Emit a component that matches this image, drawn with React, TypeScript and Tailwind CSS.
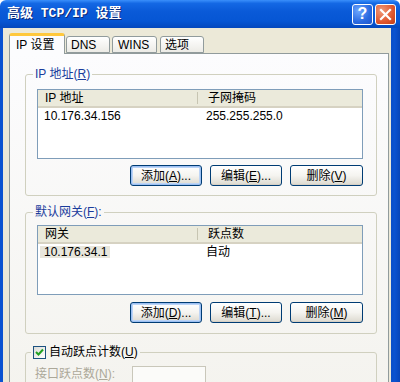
import React from "react";

const font = "font-['Liberation_Sans','Noto_Sans_CJK_SC',sans-serif]";

function U({ c }: { c: string }) {
  return <span className="underline underline-offset-[1px]">{c}</span>;
}

function Btn({ children, w, focus }: { children: React.ReactNode; w: string; focus?: boolean }) {
  return (
    <div
      className={`${w} h-[21px] rounded-[3px] border border-[#003c74] bg-gradient-to-b from-[#ffffff] via-[#f5f4f0] to-[#dcd9cf] flex items-center justify-center text-[12px] leading-[12px] text-black ${
        focus ? "shadow-[inset_0_0_0_1px_#9cc0f2,inset_0_0_0_2px_#bcd4f6]" : "shadow-[inset_0_-1px_0_#d6d0c5]"
      }`}
    >
      {children}
    </div>
  );
}

function ListView({
  h1,
  h2,
  c1,
  c2,
  selected,
}: {
  h1: string;
  h2: string;
  c1: string;
  c2: string;
  selected?: boolean;
}) {
  return (
    <div className="w-[326px] h-[70px] border border-[#7f9db9] bg-white flex flex-col">
      <div className="h-[18px] flex bg-[#ebeadb] border-b-2 border-[#d6d2c2] text-[12px] leading-[16px]">
        <div className="w-[160px] pl-[7px] flex items-center border-r border-[#c7c5b2] my-[2px]">{h1}</div>
        <div className="flex-1 pl-[10px] flex items-center">{h2}</div>
      </div>
      <div className="h-[16px] flex items-center text-[12px] leading-[12px]">
        <div className="w-[160px] pl-[2px]">
          <span className={`inline-block h-[12px] pl-[4px] pr-[3px] ${selected ? "bg-[#e8e6dc]" : ""}`}>{c1}</span>
        </div>
        <div className="flex-1 pl-[8px]">{c2}</div>
      </div>
    </div>
  );
}

function ButtonsRow({ a, b, c }: { a: React.ReactNode; b: React.ReactNode; c: React.ReactNode }) {
  return (
    <div className="w-[326px] flex justify-end gap-[8px]">
      <Btn w="w-[72px]" focus>
        {a}
      </Btn>
      <Btn w="w-[72px]">{b}</Btn>
      <Btn w="w-[73px]">{c}</Btn>
    </div>
  );
}

export default function App() {
  return (
    <div className={`w-[400px] h-[382px] overflow-hidden flex flex-col bg-white ${font}`}>
      {/* Title bar */}
      <div className="h-[28px] shrink-0 flex items-center rounded-t-[6px] bg-[linear-gradient(to_bottom,#3a8ffb_0%,#1468e4_12%,#0a5ad8_40%,#0656d4_75%,#0448bd_100%)] pl-[7px] pr-[4px]">
        <div className="flex-1 text-white text-[13px] leading-[16px] font-bold [text-shadow:1px_1px_0_#0a2a7a] font-['Liberation_Mono','Noto_Sans_CJK_SC',monospace] whitespace-pre">
          高级 TCP/IP 设置
        </div>
        <div className="flex gap-[2px] items-center">
          <div className="w-[21px] h-[21px] rounded-[3px] border border-white bg-[radial-gradient(circle_at_30%_30%,#6fa8ff,#2a6ae0_60%,#1f55cc)] flex items-center justify-center text-white font-bold text-[16px] leading-[16px]">
            ?
          </div>
          <div className="w-[21px] h-[21px] rounded-[3px] border border-white bg-[radial-gradient(circle_at_30%_30%,#f09a7a,#e0572e_60%,#c23c14)] flex items-center justify-center">
            <svg width="13" height="13" viewBox="0 0 13 13">
              <path d="M2 2 L11 11 M11 2 L2 11" stroke="white" strokeWidth="2.2" strokeLinecap="square" />
            </svg>
          </div>
        </div>
      </div>

      {/* Body */}
      <div className="flex-1 flex">
        <div className="w-[3px] bg-[#0b53d1]" />
        <div className="flex-1 bg-[#ece9d8] pl-[6px] pr-[2px] pt-[5px] flex flex-col">
          {/* Tabs */}
          <div className="h-[20px] flex items-end text-[12px] leading-[12px]">
            <div className="relative z-10 -mb-px w-[56px] h-[21px] rounded-t-[3px] border border-b-0 border-[#919b9c] border-t-[3px] border-t-[#ffc83c] bg-[#fcfcfe] pl-[6px] flex items-center">
              IP 设置
            </div>
            <div className="ml-[1px] w-[44px] h-[17px] rounded-t-[3px] border border-[#919b9c] bg-gradient-to-b from-white to-[#ecebe6] pl-[4px] flex items-center">
              DNS
            </div>
            <div className="ml-[2px] w-[45px] h-[17px] rounded-t-[3px] border border-[#919b9c] bg-gradient-to-b from-white to-[#ecebe6] pl-[5px] flex items-center">
              WINS
            </div>
            <div className="ml-[3px] w-[44px] h-[17px] rounded-t-[3px] border border-[#919b9c] bg-gradient-to-b from-white to-[#ecebe6] pl-[4px] flex items-center">
              选项
            </div>
          </div>
          {/* Panel */}
          <div className="w-[380px] flex-1 border border-[#919b9c] bg-gradient-to-b from-[#fcfcfe] to-[#f4f3ee] pl-[15px] pt-[13px] text-[12px]">
            <fieldset className="w-[352px] rounded-[3px] border border-[#d0d0bf] pl-[11px] pt-[8px] pb-[9px]">
              <legend className="ml-[-4px] px-[2px] h-[14px] leading-[14px] text-[#1a3c9c]">
                IP 地址(<U c="R" />)
              </legend>
              <ListView h1="IP 地址" h2="子网掩码" c1="10.176.34.156" c2="255.255.255.0" />
              <div className="mt-[6px]">
                <ButtonsRow
                  a={<>添加(<U c="A" />)...</>}
                  b={<>编辑(<U c="E" />)...</>}
                  c={<>删除(<U c="V" />)</>}
                />
              </div>
            </fieldset>

            <fieldset className="mt-[9px] w-[352px] rounded-[3px] border border-[#d0d0bf] pl-[11px] pt-[6px] pb-[10px]">
              <legend className="ml-[-4px] px-[2px] h-[14px] leading-[14px] text-[#1a3c9c]">
                默认网关(<U c="F" />):
              </legend>
              <ListView h1="网关" h2="跃点数" c1="10.176.34.1" c2="自动" selected />
              <div className="mt-[7px]">
                <ButtonsRow
                  a={<>添加(<U c="D" />)...</>}
                  b={<>编辑(<U c="T" />)...</>}
                  c={<>删除(<U c="M" />)</>}
                />
              </div>
            </fieldset>

            <fieldset className="mt-[11px] w-[352px] rounded-[3px] border border-[#d0d0bf] pl-[9px] pt-[7px] pb-[10px]">
              <legend className="ml-[-4px] px-[2px] h-[14px] flex items-center gap-[3px]">
                <span className="w-[13px] h-[13px] border border-[#1c5180] bg-gradient-to-br from-[#dcdcd7] to-white flex items-center justify-center">
                  <svg width="9" height="9" viewBox="0 0 9 9">
                    <path d="M1 4 L3.5 6.5 L8 1.5" stroke="#21a121" strokeWidth="2" fill="none" />
                  </svg>
                </span>
                <span className="leading-[14px] text-black">
                  自动跃点计数(<U c="U" />)
                </span>
              </legend>
              <div className="flex items-start">
                <div className="w-[97px] pt-[1px] text-[#aca899] leading-[14px]">
                  接口跃点数(<U c="N" />):
                </div>
                <div className="w-[74px] h-[21px] border border-[#c9c7ba] bg-[#fbfbf9]" />
              </div>
            </fieldset>
          </div>
        </div>
        <div className="w-[9px] bg-[linear-gradient(to_right,#0a4fc7,#0b53d1_40%,#0846b8)]" />
      </div>
    </div>
  );
}
